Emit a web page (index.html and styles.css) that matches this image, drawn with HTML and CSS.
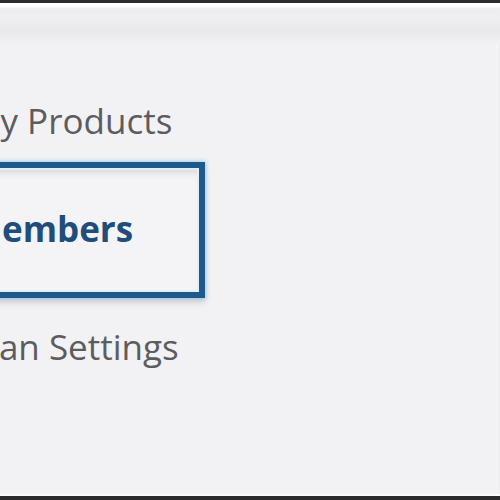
FILE: index.html
```html
<!DOCTYPE html>
<html lang="en">
<head>
    <meta charset="UTF-8">
    <meta name="viewport" content="width=device-width, initial-scale=1.0">
    <title>Account Menu</title>
    <link rel="stylesheet" href="styles.css">
</head>
<body>
    <div class="frame">
        <div class="topbar"></div>
        <ul class="menu">
            <li class="menu-item">My Products</li>
            <li class="menu-item active">Members</li>
            <li class="menu-item">Plan Settings</li>
        </ul>
    </div>
</body>
</html>
```

FILE: styles.css
```css
html, body {
    margin: 0;
    padding: 0;
}
body {
    font-family: "Open Sans", "Liberation Sans", sans-serif;
    background-color: #f2f2f4;
}
.frame {
    width: 500px;
    height: 500px;
    box-sizing: border-box;
    border-top: 3px solid #2b2b2d;
    border-bottom: 4px solid #2b2b2d;
    background-color: #f2f2f4;
    box-shadow: inset 0 -2px 0 #fbfbfc, inset -18px 0 0 -17px #ebebee;
    overflow: hidden;
}
.topbar {
    height: 42px;
    background: linear-gradient(to bottom, #fdfdfd 0px, #fdfdfd 3px, #ececee 6px, #efeff1 14px, #e9e9eb 28px, #f2f2f4 42px);
}
.menu {
    list-style: none;
    margin: 53px 0 0 -40px;
    padding: 0;
}
.menu-item {
    font-size: 35px;
    line-height: 46px;
    color: #5c5c60;
    padding-left: 9px;
    white-space: nowrap;
}
.menu-item + .menu-item {
    margin-top: 18px;
}
.menu-item.active {
    width: 245px;
    box-sizing: border-box;
    padding: 38px 0 40px 3px;
    border: 6px solid #1d5a8c;
    background-color: #f4f4f6;
    color: #1f4e7c;
    font-weight: 700;
    box-shadow: 0 0 4px 1px rgba(140, 190, 235, 0.7),
                0 5px 6px rgba(0, 0, 0, 0.12),
                inset 0 0 0 2px #e4eefa,
                inset 0 10px 8px -6px rgba(0, 0, 0, 0.13);
}
.menu-item.active + .menu-item {
    margin-top: 26px;
}
```
